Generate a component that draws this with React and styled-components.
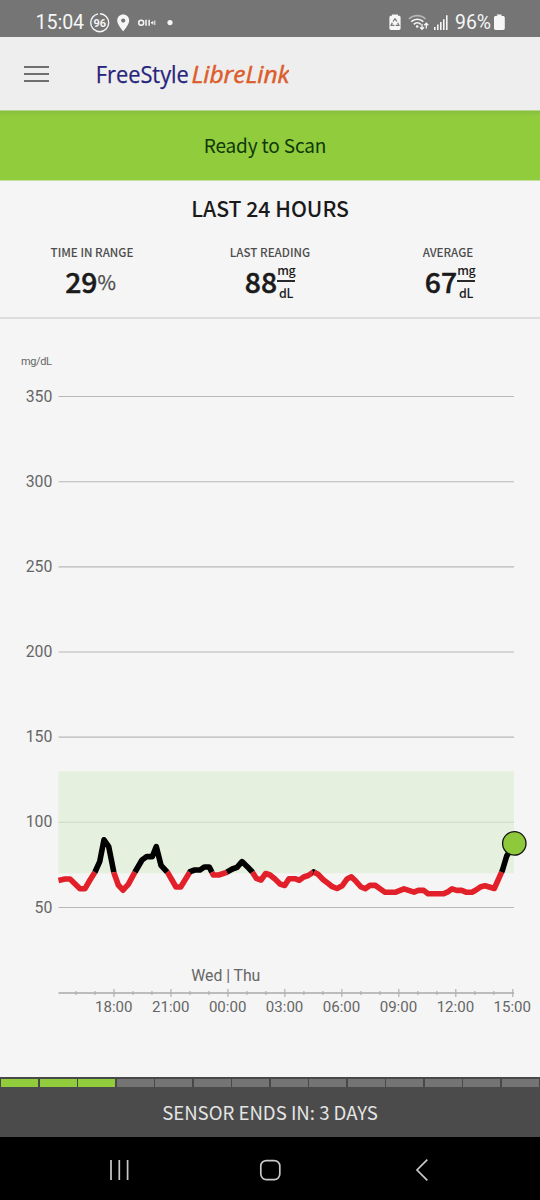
import React from 'react'
import styled, { createGlobalStyle } from 'styled-components'

const GlobalStyle = createGlobalStyle`
  * { box-sizing: border-box; }
  body {
    margin: 0;
    background: #f5f5f5;
    font-family: "Noto Sans CJK SC", "Noto Sans", sans-serif;
  }
`
const Screen = styled.div`
  display: flex;
  flex-direction: column;
  width: 540px;
  height: 1200px;
  overflow: hidden;
  background: #f5f5f5;
`
const StatusBar = styled.div`
  display: flex;
  align-items: flex-start;
  justify-content: space-between;
  flex: none;
  height: 37px;
  padding: 8px 34px 0 35px;
  background: #757575;
`
const Header = styled.div`
  display: flex;
  align-items: center;
  flex: none;
  height: 73px;
  padding: 0 24px;
  background: #eeeeee;
`
const MenuButton = styled.div`
  display: flex;
  flex-direction: column;
  gap: 5px;
  width: 25px;
  margin-right: 44px;
`
const MenuLine = styled.div`
  height: 2px;
  background: #6f6f6f;
`
const ScanBanner = styled.div`
  flex: none;
  height: 71px;
  padding-right: 10px;
  border-top: 1px solid #b5d78a;
  border-bottom: 1px solid #c3dfa0;
  background: linear-gradient(#88be40, #90cc3c 5px);
  color: #103808;
  font-size: 19px;
  line-height: 67px;
  letter-spacing: -0.15px;
  text-align: center;
`
const Summary = styled.div`
  flex: none;
  height: 138px;
  border-bottom: 2px solid #dddddd;
`
const Title = styled.div`
  padding-top: 11px;
  color: #1a1a1a;
  font-size: 21.2px;
  font-weight: 500;
  line-height: 32px;
  text-align: center;
`
const Stats = styled.div`
  display: grid;
  grid-template-columns: 184px 172px 184px;
  padding-top: 19px;
`
const Stat = styled.div`
  display: flex;
  flex-direction: column;
  align-items: center;
`
const StatLabel = styled.div`
  color: #4c4c4c;
  font-size: 11.6px;
  font-weight: 500;
  line-height: 18px;
`
const StatValue = styled.div`
  display: flex;
  align-items: center;
  height: 40px;
  padding-left: ${({ shift }) => shift || 0}px;
  color: #1a1a1a;
  font-size: 28.3px;
  font-weight: 500;
  line-height: 40px;
  -webkit-text-stroke: 0.5px #1a1a1a;
`
const Percent = styled.span`
  margin: 1px 3px 0 0;
  color: #4c4c4c;
  font-size: 20px;
  font-weight: 400;
  -webkit-text-stroke: 0.25px #4c4c4c;
`
const Unit = styled.span`
  display: flex;
  flex-direction: column;
  width: 18px;
  margin-top: 3px;
  font-size: 12.4px;
  font-weight: 500;
  letter-spacing: -0.2px;
  line-height: 22px;
  text-align: center;
  -webkit-text-stroke: 0;
`
const UnitTop = styled.span`
  height: 20px;
  line-height: 17px;
  border-bottom: 2px solid #2a2a2a;
`
const SensorBar = styled.div`
  display: grid;
  grid-template-columns: repeat(14, 1fr);
  gap: 1.5px;
  flex: none;
  height: 10px;
  padding: 1.5px 1.2px 0 1px;
  background: #484848;
`
const Day = styled.div`
  background: ${({ active }) => active ? '#90cc3c' : '#747474'};
`
const SensorLabel = styled.div`
  flex: none;
  height: 50px;
  background: #4b4b4b;
  color: #e4e4e4;
  font-size: 18.6px;
  line-height: 49px;
  text-align: center;
`
const NavBar = styled.div`
  display: flex;
  flex: none;
  height: 63px;
  background: #000000;
`

const CHART_TOP = 319
const LEVELS = [350, 300, 250, 200, 150, 100, 50]
const HOURS = ['18:00', '21:00', '00:00', '03:00', '06:00', '09:00', '12:00', '15:00']
const LOW_Y = 872.2
const TRACE = [
  [58.5, 880.5], [65, 879], [70, 879], [80, 888.7], [85, 888.7], [90, 880], [95, 872],
  [99.7, 861.7], [104, 839.8], [108.7, 846.5], [114, 873], [118.3, 885], [123, 890.2],
  [128.3, 884.3], [135, 872], [142, 860], [146.7, 856.6], [152.3, 856.6], [156.3, 846.6],
  [161, 865.3], [167.7, 872.7], [176, 887], [180.7, 887], [185, 880], [190, 871.7],
  [194.7, 870], [200, 870], [204.3, 867], [209.3, 867], [213.3, 875], [218.7, 875],
  [226.7, 872.3], [232.3, 869], [237, 867.3], [242, 861.6], [247.3, 866.7], [252.3, 872],
  [256.3, 878.3], [261, 880], [265.7, 873.5], [270, 875], [275, 879], [280, 884],
  [284.7, 885.5], [289, 878.7], [295, 878.7], [299.3, 880.3], [303.7, 877], [308.3, 875.5],
  [313.7, 871.9], [318, 874.3], [323.3, 879.7], [328.3, 883.5], [332.3, 886.7], [337, 888.5],
  [342.3, 885.7], [347.3, 878.7], [351.3, 876.9], [356, 881.3], [361, 887], [365.3, 888.6],
  [370, 885.4], [375.3, 885.4], [380, 888.7], [385, 892.2], [395.7, 892.2], [404, 888.8],
  [414, 892.2], [418.3, 890.4], [423.7, 890.4], [428, 893.8], [443.3, 893.8], [447.3, 892.2],
  [452, 888.9], [456.7, 890.4], [461.7, 890.4], [466, 892.2], [472, 892.2], [476, 890],
  [481, 886.7], [485, 885.7], [494.3, 888.5], [502.3, 870.7], [506.7, 856], [514.5, 843.3]
]

// cuts the trace where it crosses the low limit, so each run has one colour
const splitRuns = points => {
  const runs = [{ low: points[0][1] > LOW_Y, points: [points[0]] }]
  for (let i = 1; i < points.length; i++) {
    const [x0, y0] = points[i - 1]
    const [x1, y1] = points[i]
    const low = y1 > LOW_Y
    const run = runs[runs.length - 1]
    if (low !== run.low) {
      const cut = [x0 + (x1 - x0) * (LOW_Y - y0) / (y1 - y0), LOW_Y]
      run.points.push(cut)
      runs.push({ low, points: [cut, [x1, y1]] })
    } else {
      run.points.push([x1, y1])
    }
  }
  return runs
}

const levelY = level => 907.5 - (level - 50) * 1.7033

const ChartSvg = styled.svg`
  flex: none;
  fill: #666666;
  font-family: Roboto, sans-serif;
`

const Chart = () => (
  <ChartSvg width="540" height="758" viewBox={`0 ${CHART_TOP} 540 758`}>
    <text x="21" y="365" fontSize="11" textLength="31">mg/dL</text>
    {LEVELS.map(level => (
      <g key={level}>
        <text x="52.3" y={levelY(level) + 5} fontSize="15.8" textAnchor="end">{level}</text>
        <line x1="58.5" x2="514" y1={levelY(level)} y2={levelY(level)} stroke="#b8b8b8" strokeWidth="1.1" />
      </g>
    ))}
    <rect x="58.5" y="771.3" width="455.5" height="102" fill="#e0eed5" opacity="0.7" />
    <text x="191.3" y="981" fontSize="15.8" textLength="69">Wed | Thu</text>
    <line x1="58.5" x2="514" y1="993" y2="993" stroke="#a8a8a8" strokeWidth="1.3" />
    {Array.from({ length: 24 }, (_, i) => {
      const x = 76 + i * 18.99
      const major = i % 3 === 2
      return <line key={i} x1={x} x2={x} y1={major ? 989 : 991} y2={major ? 997 : 995} stroke="#b0b0b0" strokeWidth="1.2" />
    })}
    {HOURS.map((hour, i) => (
      <text key={hour} x={113.8 + i * 56.93} y="1012" fontSize="15.5" textLength="37.5" lengthAdjust="spacingAndGlyphs" textAnchor="middle">{hour}</text>
    ))}
    {splitRuns(TRACE).map((run, i) => (
      <polyline
        key={i}
        points={run.points.join(' ')}
        fill="none"
        stroke={run.low ? '#e2202a' : '#000000'}
        strokeWidth="5.6"
        strokeLinejoin="round"
      />
    ))}
    <circle cx="514.3" cy="843.4" r="11.7" fill="#8dc93a" stroke="#111111" strokeWidth="1.3" />
  </ChartSvg>
)

const Logo = () => (
  <svg width="196" height="34" viewBox="0 0 196 34" fontFamily="'Open Sans', sans-serif">
    <text x="2.8" y="25.6" fontSize="24" fill="#27247b" stroke="#27247b" strokeWidth="0.25" textLength="93" lengthAdjust="spacingAndGlyphs">FreeStyle</text>
    <text x="98.5" y="25.6" fontSize="23.5" fontStyle="italic" fill="#dc5c2b" stroke="#dc5c2b" strokeWidth="0.5" textLength="98" lengthAdjust="spacingAndGlyphs">LibreLink</text>
  </svg>
)

const StatusLeft = () => (
  <svg width="142" height="28" viewBox="35 8 142 28" fill="#f6f6f6" fontFamily="Roboto, sans-serif">
    <text x="35.6" y="29.3" fontSize="19.6" textLength="48.5">15:04</text>
    <circle cx="99.7" cy="22.7" r="9" fill="none" stroke="#f6f6f6" strokeWidth="1.4" strokeDasharray="54.55 2" strokeDashoffset="14.1" />
    <text x="99.7" y="26.7" fontSize="11" fontWeight="700" textAnchor="middle">96</text>
    <path fillRule="evenodd" d="M123.2 14.5c-3.4 0-6 2.6-6 6 0 4.4 6 10.8 6 10.8s6-6.4 6-10.8c0-3.4-2.6-6-6-6zm0 4a2.1 2.1 0 1 1 0 4.2 2.1 2.1 0 0 1 0-4.2z" />
    <circle cx="141.2" cy="22.8" r="2.5" fill="none" stroke="#f6f6f6" strokeWidth="1.5" />
    <path d="M145.300 19.800h1.500v6h-1.500zM148.400 19.800h1.500v6h-1.500zM151 22h2v1.600h-2zM152.400 21h1v3.500h-1zM154.300 20.500h1v4.500h-1z" />
    <circle cx="170" cy="22.6" r="2.6" />
  </svg>
)

const StatusRight = () => (
  <svg width="119" height="28" viewBox="387 8 119 28" fill="#f6f6f6" fontFamily="Roboto, sans-serif">
    <path d="M392 14.400h6v1.300h1c1 0 1.600.7 1.600 1.600v11c0 1-.7 1.700-1.600 1.700h-8c-1 0-1.600-.7-1.600-1.700v-11c0-1 .7-1.600 1.600-1.600h1z" />
    <path d="M393 21.500l2-2.700 2 2.700M397.700 22.700l1.200 2.700h-3.200M394.300 25.400h-3.200l1.200-2.700" fill="none" stroke="#757575" strokeWidth="1.2" />
    <g fill="none" stroke="#f6f6f6" strokeWidth="1.7">
      <path d="M409 19c4.500-4.500 12-4.500 16.500 0" opacity=".5" />
      <path d="M411.300 21.700c3.500-3.300 8.500-3.300 12 0" />
      <path d="M413.800 24.300c2-1.900 5-1.900 7 0" />
      <path d="M422 24v5.300M420 27.300l2 2 2-2M426.300 28.500v-5.300M424.300 25.200l2-2 2 2" strokeWidth="1.3" />
    </g>
    <circle cx="417.2" cy="26.5" r="1.3" />
    <path d="M434 27h1.600v3H434zM437 24.600h1.600V30H437zM440 22h1.600v8H440zM443 19.200h1.600V30H443zM446 15.300h1.600V30H446z" />
    <text x="455" y="29.3" fontSize="19.8" textLength="36" lengthAdjust="spacingAndGlyphs">96%</text>
    <path d="M496.500 14.500h5v1.600h1.500c1 0 1.800.7 1.800 1.700v10.500c0 1-.7 1.700-1.700 1.700h-7.400c-1 0-1.700-.7-1.700-1.700V17.800c0-1 .7-1.700 1.700-1.700h1.800z" />
  </svg>
)

const Nav = () => (
  <svg width="540" height="63" viewBox="0 1137 540 63" fill="none" stroke="#c9c9c9" strokeWidth="1.7">
    <path d="M111 1160v20M119.300 1160v20M127.600 1160v20" />
    <rect x="260.8" y="1160.6" width="19" height="19" rx="5.5" />
    <path d="M427.300 1159.700l-10.300 10.300 10.300 10.300" />
  </svg>
)

const Reading = ({ label, value, percent, shift }) => (
  <Stat>
    <StatLabel>{label}</StatLabel>
    <StatValue shift={shift}>
      {value}
      {percent ? <Percent>%</Percent> : <Unit><UnitTop>mg</UnitTop>dL</Unit>}
    </StatValue>
  </Stat>
)

export default function App() {
  return (
    <Screen>
      <GlobalStyle />
      <StatusBar>
        <StatusLeft />
        <StatusRight />
      </StatusBar>
      <Header>
        <MenuButton>
          <MenuLine />
          <MenuLine />
          <MenuLine />
        </MenuButton>
        <Logo />
      </Header>
      <ScanBanner>Ready to Scan</ScanBanner>
      <Summary>
        <Title>LAST 24 HOURS</Title>
        <Stats>
          <Reading label="TIME IN RANGE" value="29" percent />
          <Reading label="LAST READING" value="88" />
          <Reading label="AVERAGE" value="67" shift={4} />
        </Stats>
      </Summary>
      <Chart />
      <SensorBar>
        {Array.from({ length: 14 }, (_, i) => <Day key={i} active={i < 3 ? 1 : 0} />)}
      </SensorBar>
      <SensorLabel>SENSOR ENDS IN: 3 DAYS</SensorLabel>
      <NavBar><Nav /></NavBar>
    </Screen>
  )
}
